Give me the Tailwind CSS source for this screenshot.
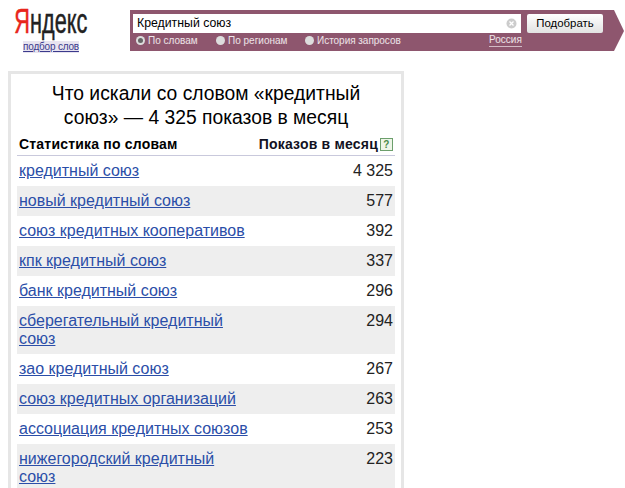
<!DOCTYPE html>
<html><head><meta charset="utf-8"><script src="https://cdn.jsdelivr.net/npm/@tailwindcss/browser@4"></script></head>
<body class="bg-white overflow-hidden h-[488px] font-['Liberation_Sans',Arial,sans-serif] text-black">
<div class="flex items-start h-[71px]">
  <div class="w-[130px] shrink-0 pt-[5px] flex flex-col items-center pr-[28px]">
    <div class="h-[32px] text-[35px] leading-[32px] origin-center scale-x-[0.62] whitespace-nowrap [-webkit-text-stroke:0.5px_currentColor]"><span class="text-[#e8261b]">Я</span><span class="text-[#222]">ндекс</span></div>
    <a class="mt-[4px] text-[10px] leading-[12px] tracking-[-0.2px] text-[#3b3a8c] underline bg-[#e8e4f0]">подбор слов</a>
  </div>
  <div class="mt-[10px] relative w-[494px] h-[42px]">
    <svg class="absolute inset-0" width="494" height="42" viewBox="0 0 494 42"><polygon points="0,0 484,0 494,21 484,41 0,41" fill="#8e566e"/></svg>
    <div class="relative pl-[3px] pt-[4px]">
      <div class="flex items-start">
        <div class="w-[388px] h-[19px] bg-white flex items-center justify-between pl-[4px] pr-[4px] text-[12.3px]">
          <span>Кредитный союз</span>
          <svg width="11" height="11" viewBox="0 0 11 11"><circle cx="5.5" cy="5.5" r="5" fill="#ccc"/><path d="M3.5 3.5l4 4M7.5 3.5l-4 4" stroke="#fff" stroke-width="1.3"/></svg>
        </div>
        <button class="ml-[6px] w-[76px] h-[19px] rounded-[2px] bg-gradient-to-b from-white to-[#e2e2e2] text-[11.4px] leading-[19px] text-center">Подобрать</button>
      </div>
      <div class="flex items-center h-[15px] text-[10px] leading-[15px] text-white/85 pl-[3px] relative">
        <span class="flex items-center w-[80px] gap-[3px]"><span class="w-[9px] h-[9px] rounded-full bg-[#ddd] flex items-center justify-center"><span class="w-[5px] h-[5px] rounded-full bg-[#666]"></span></span>По словам</span>
        <span class="flex items-center w-[89px] gap-[3px]"><span class="w-[9px] h-[9px] rounded-full bg-[#ddd]"></span>По регионам</span>
        <span class="flex items-center w-[184px] gap-[3px] tracking-[-0.03px]"><span class="w-[9px] h-[9px] rounded-full bg-[#ddd]"></span>История запросов</span>
        <span class="border-b border-white/60 leading-[12px]">Россия</span>
      </div>
    </div>
  </div>
</div>
<div class="ml-[8px] w-[396px] border-[3px] border-[#e6e6e6] border-b-0 pl-[6px] pr-[6px] h-[417px] overflow-hidden">
  <h1 class="text-[19.3px] leading-[24px] text-center pt-[8px] px-[20px] font-normal">Что искали со словом «кредитный союз» — 4 325 показов в месяц</h1>
  <div class="flex justify-between items-center h-[24px] mt-[2px] pt-[1px] border-b border-[#c9c9dc] text-[14px] tracking-[0.2px] font-bold pl-[2px] pr-[2px]">
    <span>Статистика по словам</span>
    <span class="flex items-center gap-[2px] text-[#111122]">Показов в месяц<span class="w-[13px] h-[13px] border border-[#6c9f6c] bg-[#eef5e8] text-[#4a8a4a] text-[10px] leading-[11px] text-center font-bold">?</span></span>
  </div>
  <div class="text-[16px] leading-[18px] text-[#222]">
    <div class="flex justify-between pl-[2px] pr-[2px] pt-[6px] h-[30px]"><a class="text-[#2b4ea8] underline w-[225px]">кредитный союз</a><span>4 325</span></div>
    <div class="flex justify-between pl-[2px] pr-[2px] pt-[6px] h-[30px] bg-[#eeeeee]"><a class="text-[#2b4ea8] underline w-[230px]">новый кредитный союз</a><span>577</span></div>
    <div class="flex justify-between pl-[2px] pr-[2px] pt-[6px] h-[30px]"><a class="text-[#2b4ea8] underline w-[230px]">союз кредитных кооперативов</a><span>392</span></div>
    <div class="flex justify-between pl-[2px] pr-[2px] pt-[6px] h-[30px] bg-[#eeeeee]"><a class="text-[#2b4ea8] underline w-[230px]">кпк кредитный союз</a><span>337</span></div>
    <div class="flex justify-between pl-[2px] pr-[2px] pt-[6px] h-[30px]"><a class="text-[#2b4ea8] underline w-[230px]">банк кредитный союз</a><span>296</span></div>
    <div class="flex justify-between pl-[2px] pr-[2px] pt-[6px] h-[48px] bg-[#eeeeee]"><a class="text-[#2b4ea8] underline w-[230px]">сберегательный кредитный союз</a><span>294</span></div>
    <div class="flex justify-between pl-[2px] pr-[2px] pt-[6px] h-[30px]"><a class="text-[#2b4ea8] underline w-[230px]">зао кредитный союз</a><span>267</span></div>
    <div class="flex justify-between pl-[2px] pr-[2px] pt-[6px] h-[30px] bg-[#eeeeee]"><a class="text-[#2b4ea8] underline w-[230px]">союз кредитных организаций</a><span>263</span></div>
    <div class="flex justify-between pl-[2px] pr-[2px] pt-[6px] h-[30px]"><a class="text-[#2b4ea8] underline w-[230px]">ассоциация кредитных союзов</a><span>253</span></div>
    <div class="flex justify-between pl-[2px] pr-[2px] pt-[6px] h-[48px] bg-[#eeeeee]"><a class="text-[#2b4ea8] underline w-[230px]">нижегородский кредитный союз</a><span>223</span></div>
  </div>
</div>
</body></html>
